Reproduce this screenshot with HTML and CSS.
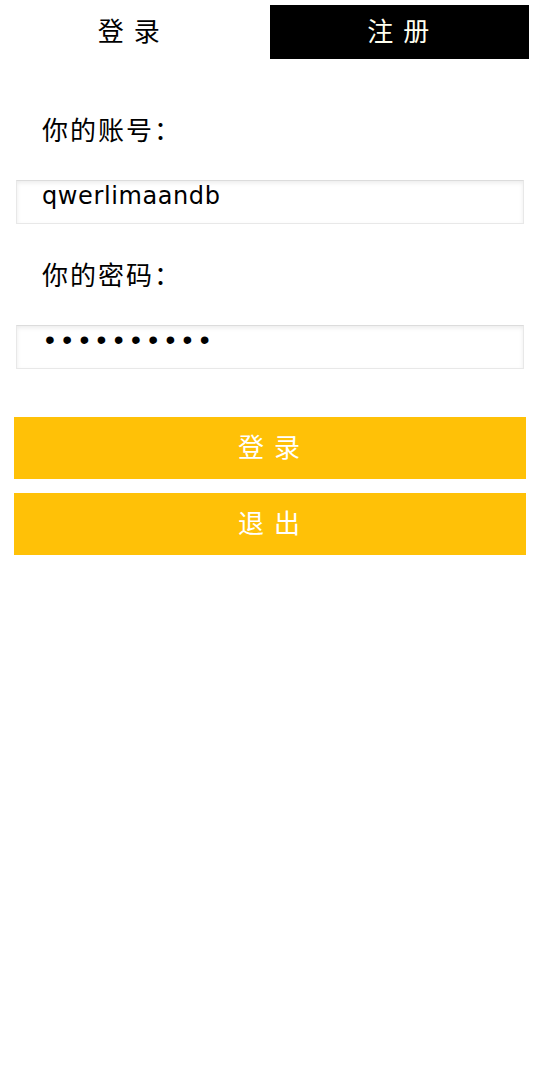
FILE: index.html
```html
<!DOCTYPE html>
<html lang="zh-CN">
<head>
    <meta charset="UTF-8">
    <meta name="viewport" content="width=device-width, initial-scale=1.0">
    <title>登录</title>

    <link rel="stylesheet" href="styles.css">
</head>
<body>
    <nav class="tabs">
        <a href="#" class="tab">登 录</a>
        <a href="#" class="tab tab-active">注 册</a>
    </nav>

    <form class="login_form">
        <label for="account">你的账号：</label>
        <input type="text" id="account" value="qwerlimaandb">

        <label for="password">你的密码：</label>
        <input type="password" id="password" value="qwerlimaan">

        <div class="buttons">
            <button type="submit">登 录</button>
            <button type="button">退 出</button>
        </div>
    </form>
</body>
</html>
```

FILE: styles.css
```css
* {
    font-family: "Noto Sans CJK SC", "Noto Sans", sans-serif;
    margin: 0;
    padding: 0;
    box-sizing: border-box;
}

body {
    background-color: white;
}

/* Tabs */
.tabs {
    display: flex;
    gap: 10px;
    padding: 5px 11px 0 0;
}

.tab {
    flex: 1;
    height: 54px;
    padding-bottom: 5px;
    display: flex;
    align-items: center;
    justify-content: center;
    color: black;
    font-size: 26px;
    letter-spacing: 2px;
    text-decoration: none;
}

.tab-active {
    background-color: black;
    color: #fffff0;
}

/* Form */
.login_form {
    display: flex;
    flex-direction: column;
    padding: 0 14px;
}

.login_form label {
    height: 36px;
    margin-left: 28px;
    font-size: 26px;
    letter-spacing: 2px;
    line-height: 36px;
    color: black;
}

.login_form label[for="account"] {
    margin-top: 52px;
}

.login_form label[for="password"] {
    margin-top: 32px;
}

.login_form input {
    width: 508px;
    height: 44px;
    margin: 33px 2px 0;
    padding: 0 25px 13px;
    border: 1px solid #e8e8e8;
    border-top-color: #dcdcdc;
    box-shadow: inset 0 2px 4px rgba(0, 0, 0, 0.08);
    outline: none;
    color: black;
    font-family: "DejaVu Sans", sans-serif;
    font-size: 24px;
    letter-spacing: 0.6px;
}

#password {
    font-family: "Liberation Sans", sans-serif;
    font-size: 28px;
    letter-spacing: 7.4px;
    padding-left: 28px;
    padding-bottom: 14px;
}

.buttons {
    display: flex;
    flex-direction: column;
    gap: 14px;
    margin-top: 48px;
}

.buttons button {
    height: 62px;
    padding-bottom: 6px;
    border: none;
    background-color: #ffc107;
    color: white;
    font-size: 26px;
    letter-spacing: 2px;
}
```
